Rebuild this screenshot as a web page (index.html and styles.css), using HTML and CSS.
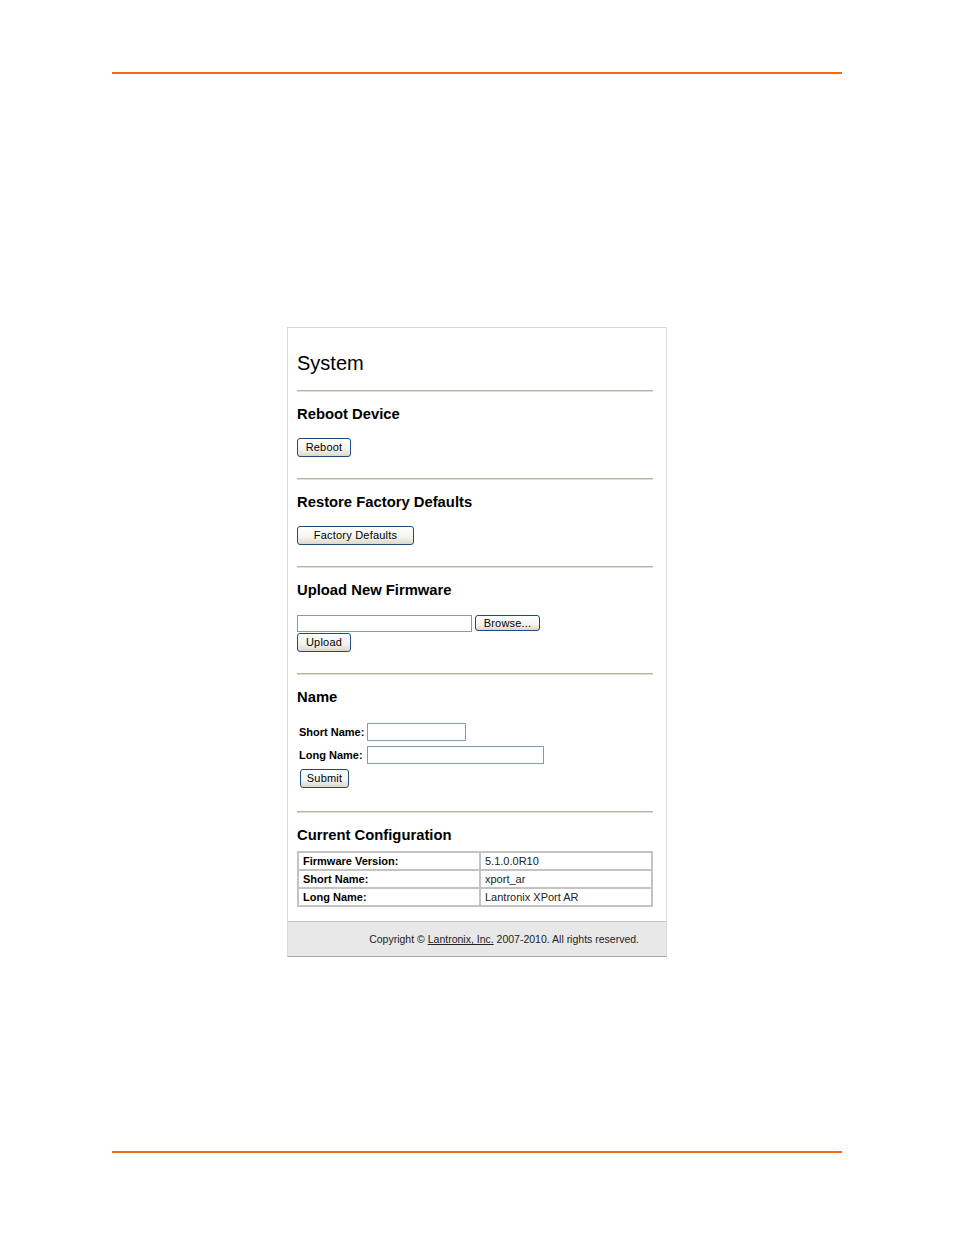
FILE: index.html
```html
<!DOCTYPE html>
<html>
<head>
<meta charset="utf-8">
<title>System</title>
<link rel="stylesheet" href="styles.css">
</head>
<body>
<div class="page">
  <div class="rule rule-top"></div>
  <div class="card">
    <div class="content">
      <h1 class="title">System</h1>

      <div class="section">
        <h2 class="sec-title">Reboot Device</h2>
        <div class="sec-body">
          <button class="btn btn-reboot">Reboot</button>
        </div>
      </div>

      <div class="section">
        <h2 class="sec-title">Restore Factory Defaults</h2>
        <div class="sec-body">
          <button class="btn btn-factory">Factory Defaults</button>
        </div>
      </div>

      <div class="section">
        <h2 class="sec-title">Upload New Firmware</h2>
        <div class="sec-body file-body">
          <div class="file-row">
            <span class="file-input"></span>
            <button class="btn btn-browse">Browse...</button>
          </div>
          <button class="btn btn-reboot btn-upload">Upload</button>
        </div>
      </div>

      <div class="section section-name">
        <h2 class="sec-title">Name</h2>
        <div class="sec-body name-body">
          <div class="form-grid">
            <label class="form-label">Short Name:</label>
            <span class="text-input short"></span>
            <label class="form-label">Long Name:</label>
            <span class="text-input long"></span>
          </div>
          <button class="btn btn-submit">Submit</button>
        </div>
      </div>

      <div class="section section-config">
        <h2 class="sec-title">Current Configuration</h2>
        <table class="config">
          <tr><th>Firmware Version:</th><td>5.1.0.0R10</td></tr>
          <tr><th>Short Name:</th><td>xport_ar</td></tr>
          <tr><th>Long Name:</th><td>Lantronix XPort AR</td></tr>
        </table>
      </div>
    </div>
    <div class="footer">Copyright &copy; <a class="footer-link" href="#">Lantronix, Inc.</a> 2007-2010. All rights reserved.</div>
  </div>
  <div class="rule rule-bottom"></div>
</div>
</body>
</html>
```

FILE: styles.css
```css
html, body {
  margin: 0;
  padding: 0;
  background: #ffffff;
}

body {
  font-family: "Liberation Sans", Arial, sans-serif;
  color: #000;
}

.page {
  width: 954px;
  height: 1235px;
  overflow: hidden;
  padding-top: 72px;
  box-sizing: border-box;
}

.rule {
  margin-left: 112px;
  width: 730px;
  height: 2px;
  background: #f26a10;
}

.rule-bottom {
  margin-top: 194px;
}

.card {
  margin-top: 253px;
  margin-left: 287px;
  width: 378px;
  border: 1px solid #d9d9d9;
  border-bottom: 1px solid #a9a9a9;
  background: #fff;
}

.content {
  padding: 24px 13px 14px 9px;
}

.title {
  margin: 0;
  font-size: 20px;
  line-height: 23px;
  font-weight: normal;
}

.section {
  margin-top: 15px;
  border-top: 1px solid #b7b3a3;
  box-shadow: 0 1px 0 #e0ddd2 inset;
  padding-top: 15px;
  padding-bottom: 21px;
}

.section + .section {
  margin-top: 0;
}

.section-name {
  padding-bottom: 23px;
}

.section-config {
  padding-bottom: 0;
}

.sec-title {
  margin: 0;
  font-size: 14.8px;
  line-height: 17px;
  font-weight: bold;
}

.sec-body {
  margin-top: 15px;
  display: flex;
  flex-direction: column;
  align-items: flex-start;
}

.btn {
  font-family: "Liberation Sans", Arial, sans-serif;
  font-size: 11px;
  color: #000;
  height: 19px;
  line-height: 15px;
  padding: 0 8px;
  border: 1px solid #1c4c80;
  border-radius: 3px;
  background: linear-gradient(#ffffff, #f4f3ee 60%, #dcd8c8);
  box-sizing: border-box;
  letter-spacing: 0.2px;
}

.btn-reboot {
  width: 54px;
  padding: 0;
}

.btn-factory {
  width: 117px;
  padding: 0;
}

.file-body {
  margin-top: 16px;
}

.file-row {
  display: flex;
  gap: 3px;
  align-items: flex-start;
}

.file-input {
  display: block;
  width: 175px;
  height: 17px;
  box-sizing: border-box;
  border: 1px solid #7f9db9;
  background: #fff;
}

.btn-browse {
  width: 65px;
  height: 16px;
  line-height: 12px;
  padding: 0;
}

.btn-upload {
  margin-top: 1px;
}

.name-body {
  margin-top: 17px;
}

.form-grid {
  display: grid;
  grid-template-columns: 68px auto;
  row-gap: 5px;
  align-items: center;
  padding-left: 2px;
}

.form-label {
  font-size: 11px;
  font-weight: bold;
  white-space: nowrap;
}

.text-input {
  display: block;
  height: 18px;
  box-sizing: border-box;
  border: 1px solid #7f9db9;
  background: #fff;
}

.text-input.short {
  width: 99px;
}

.text-input.long {
  width: 177px;
}

.btn-submit {
  margin-top: 5px;
  margin-left: 3px;
  width: 49px;
  padding: 0;
}

.config {
  margin-top: 7px;
  width: 356px;
  border-collapse: collapse;
  border: 2px solid #c3c3c3;
  font-size: 11px;
}

.config th,
.config td {
  border: 2px solid #c3c3c3;
  height: 14px;
  line-height: 14px;
  padding: 1px 4px;
  text-align: left;
}

.config th {
  width: 172px;
  font-weight: bold;
}

.config td {
  font-weight: normal;
  color: #222;
}

.footer {
  border-top: 1px solid #c4c4c4;
  background: #e8e8e8;
  height: 34px;
  line-height: 34px;
  font-size: 10.5px;
  color: #222;
  text-align: right;
  padding-right: 27px;
}

.footer-link {
  color: #222;
  text-decoration: underline;
}
```
